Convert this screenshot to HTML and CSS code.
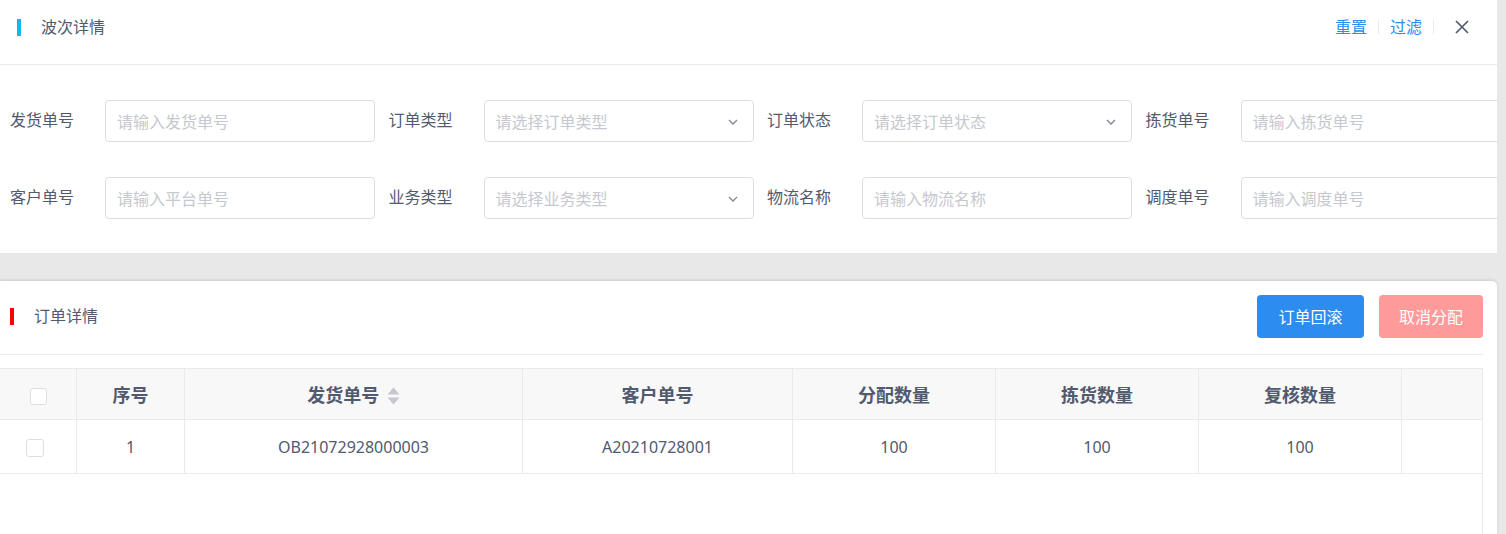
FILE: index.html
```html
<!DOCTYPE html>
<html lang="zh-CN">
<head>
    <meta charset="UTF-8">
    <meta name="viewport" content="width=device-width, initial-scale=1.0">
    <title>波次详情</title>
    <link rel="stylesheet" href="styles.css">
</head>
<body>
    <div class="page">
        <div class="card wave-card">
            <div class="panel-head">
                <span class="mark mark-blue"></span>
                <span class="panel-title">波次详情</span>
                <div class="head-actions">
                    <a class="link">重置</a>
                    <span class="split"></span>
                    <a class="link">过滤</a>
                    <span class="split split-wide"></span>
                    <svg class="close" width="14" height="14" viewBox="0 0 14 14">
                        <path d="M1 1 L13 13 M13 1 L1 13" stroke="#515a6e" stroke-width="1.7" fill="none"/>
                    </svg>
                </div>
            </div>
            <div class="filter-form">
                <div class="form-item">
                    <label>发货单号</label>
                    <div class="field">请输入发货单号</div>
                </div>
                <div class="form-item">
                    <label>订单类型</label>
                    <div class="field select">请选择订单类型
                        <svg class="arrow" width="10" height="6" viewBox="0 0 10 6"><path d="M1 1 L5 5 L9 1" stroke="#808695" stroke-width="1.3" fill="none"/></svg>
                    </div>
                </div>
                <div class="form-item">
                    <label>订单状态</label>
                    <div class="field select">请选择订单状态
                        <svg class="arrow" width="10" height="6" viewBox="0 0 10 6"><path d="M1 1 L5 5 L9 1" stroke="#808695" stroke-width="1.3" fill="none"/></svg>
                    </div>
                </div>
                <div class="form-item">
                    <label>拣货单号</label>
                    <div class="field">请输入拣货单号</div>
                </div>
                <div class="form-item">
                    <label>客户单号</label>
                    <div class="field">请输入平台单号</div>
                </div>
                <div class="form-item">
                    <label>业务类型</label>
                    <div class="field select">请选择业务类型
                        <svg class="arrow" width="10" height="6" viewBox="0 0 10 6"><path d="M1 1 L5 5 L9 1" stroke="#808695" stroke-width="1.3" fill="none"/></svg>
                    </div>
                </div>
                <div class="form-item">
                    <label>物流名称</label>
                    <div class="field">请输入物流名称</div>
                </div>
                <div class="form-item">
                    <label>调度单号</label>
                    <div class="field">请输入调度单号</div>
                </div>
            </div>
        </div>

        <div class="card order-card">
            <div class="panel-head order-head">
                <span class="mark mark-red"></span>
                <span class="panel-title">订单详情</span>
                <div class="head-actions">
                    <button class="btn btn-primary">订单回滚</button>
                    <button class="btn btn-danger">取消分配</button>
                </div>
            </div>
            <div class="table-wrap">
                <table class="grid">
                    <colgroup>
                        <col style="width:77px">
                        <col style="width:108px">
                        <col style="width:338px">
                        <col style="width:270px">
                        <col style="width:203px">
                        <col style="width:203px">
                        <col style="width:203px">
                        <col>
                    </colgroup>
                    <thead>
                        <tr>
                            <th><span class="check"></span></th>
                            <th>序号</th>
                            <th>发货单号
                                <svg class="sort" width="13" height="18" viewBox="0 0 13 18">
                                    <path d="M0.5 7.5 L6.5 0.5 L12.5 7.5 Z M0.5 10.5 L6.5 17.5 L12.5 10.5 Z" fill="#c5c8ce"/>
                                </svg>
                            </th>
                            <th>客户单号</th>
                            <th>分配数量</th>
                            <th>拣货数量</th>
                            <th>复核数量</th>
                            <th></th>
                        </tr>
                    </thead>
                    <tbody>
                        <tr>
                            <td><span class="check check-row"></span></td>
                            <td>1</td>
                            <td>OB21072928000003</td>
                            <td>A20210728001</td>
                            <td>100</td>
                            <td>100</td>
                            <td>100</td>
                            <td></td>
                        </tr>
                    </tbody>
                </table>
            </div>
        </div>
    </div>
</body>
</html>
```

FILE: styles.css
```css
body {
    margin: 0;
    background: #e8e8e8;
    font-family: "Noto Sans", "Noto Sans CJK SC", sans-serif;
    color: #515a6e;
    overflow: hidden;
}
.page {
    width: 1497px;
    display: flex;
    flex-direction: column;
}
.card {
    background: #fff;
}
.wave-card {
    height: 253px;
    overflow: hidden;
}
.panel-head {
    display: flex;
    align-items: center;
    height: 54px;
    padding: 0 28px 10px 17px;
    border-bottom: 1px solid #e8eaec;
}
.mark {
    width: 4px;
    height: 17px;
    margin-right: 20px;
}
.mark-blue {
    background: #0fb9f7;
}
.mark-red {
    background: #ff0000;
}
.panel-title {
    font-size: 16px;
    line-height: 20px;
}
.head-actions {
    margin-left: auto;
    display: flex;
    align-items: center;
}
.link {
    color: #2d8cf0;
    font-size: 16px;
    line-height: 20px;
    cursor: pointer;
}
.split {
    width: 1px;
    height: 14px;
    background: #e8eaec;
    margin: 0 11px;
}
.split-wide {
    margin-right: 21px;
}
.close {
    display: block;
}
.filter-form {
    display: grid;
    grid-template-columns: repeat(4, 365px);
    column-gap: 13.5px;
    row-gap: 35px;
    padding: 35px 0 0 10px;
}
.form-item {
    display: flex;
    align-items: center;
}
.form-item label {
    width: 95px;
    flex: none;
    font-size: 16px;
    line-height: 20px;
    margin-top: -2px;
}
.field {
    width: 270px;
    height: 42px;
    box-sizing: border-box;
    flex: none;
    border: 1px solid #dcdee2;
    border-radius: 4px;
    padding-left: 11px;
    display: flex;
    align-items: center;
    color: #c5c8ce;
    font-size: 16px;
}
.select {
    position: relative;
}
.arrow {
    position: absolute;
    right: 15px;
    top: 18px;
}
.order-card {
    margin-top: 28px;
    height: 260px;
    border-top-right-radius: 5px;
    box-shadow: 0 -1px 3px rgba(0, 0, 0, 0.12);
    padding-right: 14px;
    display: flex;
    flex-direction: column;
}
.order-head {
    height: 70px;
    padding: 0 0 3px 10px;
}
.btn {
    height: 43px;
    border: none;
    border-radius: 4px;
    color: #fff;
    font-family: inherit;
    font-size: 16px;
    padding: 0;
}
.btn-primary {
    width: 107px;
    background: #2d8cf0;
}
.btn-danger {
    width: 104px;
    margin-left: 15px;
    background: #ff9a9a;
}
.table-wrap {
    margin-top: 13px;
    flex: 1;
    border-right: 1px solid #e8eaec;
}
.grid {
    width: 100%;
    table-layout: fixed;
    border-collapse: separate;
    border-spacing: 0;
}
.grid th,
.grid td {
    padding: 0;
    text-align: center;
    border-bottom: 1px solid #e8eaec;
    border-right: 1px solid #e8eaec;
}
.grid th:last-child,
.grid td:last-child {
    border-right: none;
}
.grid th {
    height: 50px;
    background: #f8f8f9;
    border-top: 1px solid #e8eaec;
    font-size: 18px;
    font-weight: bold;
}
.grid td {
    height: 53px;
    font-size: 16px;
}
.sort {
    vertical-align: -3px;
    margin-left: 3px;
}
.check {
    display: inline-block;
    width: 17px;
    height: 17px;
    box-sizing: border-box;
    border: 1px solid #dcdee2;
    border-radius: 3px;
    background: #fff;
    vertical-align: middle;
}
.check-row {
    width: 18px;
    height: 18px;
    margin-right: 6px;
}
```
